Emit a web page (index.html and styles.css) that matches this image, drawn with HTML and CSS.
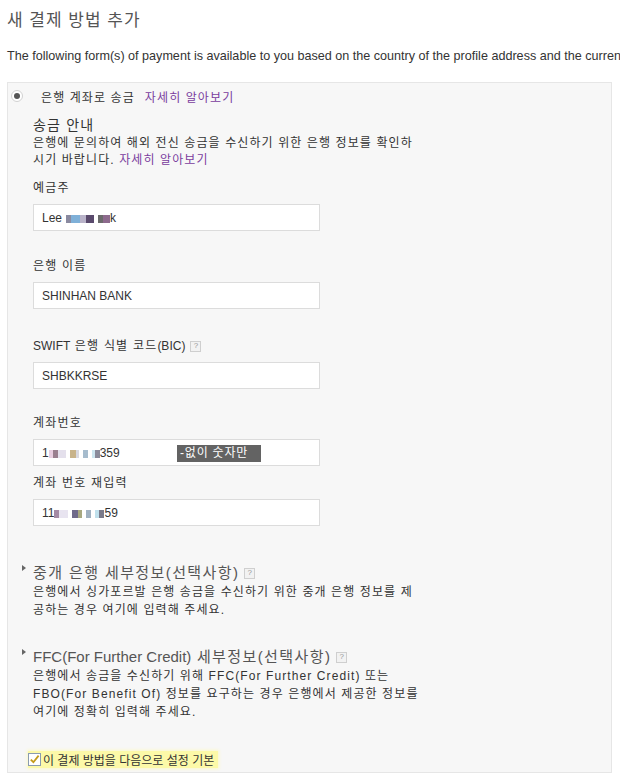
FILE: index.html
```html
<!DOCTYPE html>
<html lang="ko">
<head>
  <meta charset="UTF-8">
  <title>새 결제 방법 추가</title>
  <link rel="stylesheet" href="styles.css">
</head>
<body>
  <h1 class="title">새 결제 방법 추가</h1>
  <p class="intro">The following form(s) of payment is available to you based on the country of the profile address and the currency of your account.</p>

  <div class="panel">
    <div class="method">
      <span class="radio"><span class="dot"></span></span>
      <span class="ko">은행 계좌로 송금</span>
      <a href="#" class="link ko">자세히 알아보기</a>
    </div>

    <div class="body">
      <h2 class="sub">송금 안내</h2>
      <p class="desc">은행에 문의하여 해외 전신 송금을 수신하기 위한 은행 정보를 확인하<br>시기 바랍니다. <a href="#" class="link">자세히 알아보기</a></p>

      <div class="field f1">
        <label>예금주</label>
        <div class="box">Lee<span class="blur gap">
          <i style="background:#8a8aa0;width:5px"></i><i style="background:#7fb0d8;width:9px"></i><i style="background:#b9b3c9;width:6px"></i><i style="background:#5a4a6c;width:8px"></i></span><span class="blur gap"><i style="background:#6b6b6b;width:5px"></i><i style="background:#8d6a8d;width:7px"></i></span>k</div>
      </div>

      <div class="field f2">
        <label>은행 이름</label>
        <div class="box">SHINHAN BANK</div>
      </div>

      <div class="field f3">
        <label><span class="en">SWIFT</span>&nbsp;은행 식별 코드<span class="en">(BIC)</span><span class="help">?</span></label>
        <div class="box">SHBKKRSE</div>
      </div>

      <div class="field f4">
        <label>계좌번호</label>
        <div class="box">1<span class="blur"><i style="background:#e8cde0;width:4px"></i><i style="background:#9a7f8f;width:5px"></i><i style="background:#e4e0ec;width:8px"></i></span><span class="blur gap"><i style="background:#c8b38a;width:6px"></i><i style="background:#d8d8e0;width:3px"></i></span><span class="blur gap"><i style="background:#a6bccd;width:5px"></i></span><span class="blur gap"><i style="background:#cde6f0;width:3px"></i><i style="background:#8a8a9a;width:5px"></i></span>359<span class="hint">-없이 숫자만</span></div>
      </div>

      <div class="field f5">
        <label>계좌 번호 재입력</label>
        <div class="box">11<span class="blur"><i style="background:#a48aa4;width:5px"></i><i style="background:#e8e4f0;width:9px"></i></span><span class="blur gap"><i style="background:#6f6a8a;width:6px"></i><i style="background:#a8a880;width:4px"></i></span><span class="blur gap"><i style="background:#a0b0c0;width:5px"></i></span><span class="blur gap"><i style="background:#c0e0ec;width:4px"></i><i style="background:#7a7a8a;width:5px"></i></span>59</div>
      </div>
    </div>

    <div class="optional o1">
      <h3 class="toggle"><span class="arrow"></span>중개 은행 세부정보(선택사항)<span class="help">?</span></h3>
      <p class="desc small">은행에서 싱가포르발 은행 송금을 수신하기 위한 중개 은행 정보를 제<br>공하는 경우 여기에 입력해 주세요.</p>
    </div>

    <div class="optional o2">
      <h3 class="toggle"><span class="arrow"></span><span class="en">FFC(For Further Credit)</span>&nbsp;세부정보(선택사항)<span class="help">?</span></h3>
      <p class="desc small">은행에서 송금을 수신하기 위해 FFC(For Further Credit) 또는<br>FBO(For Benefit Of) 정보를 요구하는 경우 은행에서 제공한 정보를<br>여기에 정확히 입력해 주세요.</p>
    </div>

    <div class="default">
      <span class="mark">
        <span class="check">
          <svg width="11" height="11" viewBox="0 0 11 11"><path d="M1.8 5.6 L4.4 8.2 L9.6 1.6" fill="none" stroke="#c49a1a" stroke-width="1.8"/></svg>
        </span>이 결제 방법을 다음으로 설정 기본
      </span>
    </div>
  </div>
</body>
</html>
```

FILE: styles.css
```css
* { box-sizing: border-box; margin: 0; padding: 0; }
body {
  width: 620px;
  height: 782px;
  overflow: hidden;
  background: #ffffff;
  color: #333;
  font-family: "Liberation Sans", "Noto Sans CJK KR", sans-serif;
  font-size: 12px;
}
.title {
  font-weight: normal;
  font-size: 17px;
  letter-spacing: 1px;
  color: #555;
  padding: 6px 0 0 7px;
  height: 48px;
}
.intro {
  white-space: nowrap;
  padding-left: 7px;
  font-size: 12.6px;
  line-height: 16px;
  color: #333;
  height: 34px;
}
.panel {
  margin: 0 8px 0 7px;
  height: 691px;
  background: #f7f7f7;
  border: 1px solid #e6e6e6;
  padding-top: 4px;
}
.en { letter-spacing: 0; }
.ko { letter-spacing: 1.1px; }
.method {
  display: flex;
  align-items: center;
  height: 18px;
  padding-left: 3px;
}
.radio {
  width: 12px;
  height: 12px;
  border-radius: 50%;
  border: 1px solid #d2d2d2;
  background: #fff;
  display: flex;
  align-items: center;
  justify-content: center;
  margin-right: 18px;
}
.dot {
  width: 6px;
  height: 6px;
  border-radius: 50%;
  background: #555;
}
.method .link { margin-left: 10px; }
.link {
  color: #7a3d9e;
  text-decoration: none;
}
.body {
  padding: 10px 0 0 25px;
}
.sub {
  font-weight: normal;
  font-size: 14px;
  letter-spacing: 1.2px;
  line-height: 20px;
  color: #333;
}
.desc {
  line-height: 17px;
  letter-spacing: 1.1px;
  color: #333;
}
.field label {
  display: flex;
  align-items: center;
  letter-spacing: 1.2px;
  line-height: 16px;
  height: 16px;
  margin-bottom: 8px;
}
.f1 { margin-top: 11px; }
.f2 { margin-top: 27px; }
.f3 { margin-top: 29px; }
.f4 { margin-top: 26px; }
.f5 { margin-top: 9px; }
.box {
  position: relative;
  width: 287px;
  height: 27px;
  background: #fff;
  border: 1px solid #dcdcdc;
  padding-left: 8px;
  display: flex;
  align-items: center;
  color: #333;
}
.blur {
  display: inline-flex;
  height: 8px;
  margin-top: 2px;
}
.blur.gap { margin-left: 4px; }
.blur i {
  display: block;
  height: 8px;
}
.hint {
  position: absolute;
  left: 143px;
  top: 5px;
  background: #636363;
  color: #fff;
  padding-left: 3px;
  width: 84px;
  height: 17px;
  line-height: 17px;
  letter-spacing: 0.8px;
}
.help {
  display: inline-flex;
  width: 11px;
  height: 11px;
  border: 1px solid #cfcfcf;
  background: #f2f2f2;
  color: #999;
  font-size: 8px;
  letter-spacing: 0;
  align-items: center;
  justify-content: center;
  margin-left: 5px;
}
.optional {
  padding-left: 25px;
}
.o1 { padding-top: 38px; }
.o2 { padding-top: 29px; }
.toggle {
  position: relative;
  font-weight: normal;
  font-size: 15px;
  letter-spacing: 1.4px;
  line-height: 18px;
  color: #555;
  display: flex;
  align-items: center;
  margin-bottom: 1px;
}
.arrow {
  position: absolute;
  left: -11px;
  top: 1px;
  width: 0;
  height: 0;
  border-left: 4px solid #666;
  border-top: 3px solid transparent;
  border-bottom: 3px solid transparent;
}
.desc.small {
  line-height: 18px;
}
.default {
  padding: 30px 0 0 20px;
}
.mark {
  display: inline-flex;
  align-items: center;
  gap: 2px;
  background: #fcf9a8;
  box-shadow: 0 0 3px 1px #fcf9c8;
  height: 17px;
  padding-right: 4px;
  color: #333;
}
.check {
  width: 13px;
  height: 13px;
  border: 1px solid #8a9bb0;
  background: #fff;
  display: flex;
  align-items: center;
  justify-content: center;
}
```
